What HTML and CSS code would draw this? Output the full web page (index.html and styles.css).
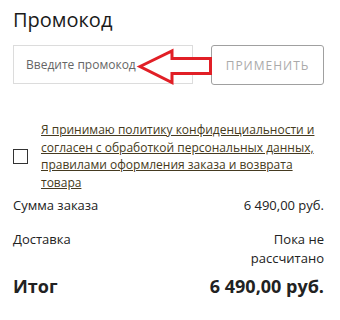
FILE: index.html
```html
<!DOCTYPE html>
<html lang="ru">
<head>
<meta charset="utf-8">
<link rel="stylesheet" href="styles.css">
</head>
<body>
<div class="panel">
  <h2 class="title">Промокод</h2>
  <div class="promo">
    <input class="promo-input" type="text" placeholder="Введите промокод">
    <button class="promo-btn" type="button">ПРИМЕНИТЬ</button>
    <svg class="arrow" width="340" height="100" viewBox="0 0 340 100">
      <polygon points="140,66.5 172,51 172,58.5 210.5,58.5 210.5,73.5 172,73.5 172,82.5" fill="#fff" stroke="#e11f26" stroke-width="3" stroke-linejoin="miter"/>
    </svg>
  </div>
  <label class="agree">
    <span class="box"></span>
    <span class="agree-text">Я принимаю политику конфиденциальности и согласен с обработкой персональных данных, правилами оформления заказа и возврата товара</span>
  </label>
  <div class="row">
    <span>Сумма заказа</span>
    <span>6 490,00 руб.</span>
  </div>
  <div class="row">
    <span>Доставка</span>
    <span class="pending">Пока не<br>рассчитано</span>
  </div>
  <div class="row total">
    <span>Итог</span>
    <span>6 490,00 руб.</span>
  </div>
</div>
</body>
</html>
```
FILE: styles.css
```css
html, body {
  margin: 0;
  padding: 0;
  background: #fff;
}
body {
  font-family: "Open Sans", "Noto Sans", sans-serif;
  color: #222;
}
.panel {
  width: 340px;
  height: 320px;
  box-sizing: border-box;
  padding: 6px 16px 0 13px;
  position: relative;
  overflow: hidden;
}
.title {
  margin: 0;
  font-size: 20px;
  font-weight: 400;
  line-height: 28px;
  color: #1a1a1a;
}
.promo {
  display: flex;
  gap: 18px;
  margin-top: 11px;
}
.promo-input {
  width: 180px;
  height: 39px;
  box-sizing: border-box;
  border: 1px solid #dcdcdc;
  padding: 0 12px;
  font-family: inherit;
  font-size: 12px;
  color: #333;
  outline: none;
}
.promo-input::placeholder {
  color: #666;
}
.promo-btn {
  width: 113px;
  height: 40px;
  box-sizing: border-box;
  border: 1px solid #a0a0a0;
  border-radius: 3px;
  background: #fff;
  font-family: inherit;
  font-size: 12px;
  letter-spacing: 1px;
  color: #aaa;
  padding: 0;
}
.arrow {
  position: absolute;
  left: 0;
  top: 0;
  pointer-events: none;
}
.agree {
  display: flex;
  align-items: center;
  gap: 13px;
  margin-top: 36px;
}
.box {
  flex: none;
  width: 15px;
  height: 15px;
  box-sizing: border-box;
  border: 1px solid #333;
}
.agree-text {
  font-size: 12px;
  line-height: 17.7px;
  color: #453a20;
  text-decoration: underline;
}
.row {
  display: flex;
  justify-content: space-between;
  align-items: flex-start;
  font-size: 13px;
  line-height: 19px;
  margin-top: 4px;
}
.row + .row {
  margin-top: 15px;
}
.pending {
  text-align: right;
}
.row.total {
  font-size: 18px;
  font-weight: 700;
  margin-top: 6px;
  line-height: 24px;
}
```
